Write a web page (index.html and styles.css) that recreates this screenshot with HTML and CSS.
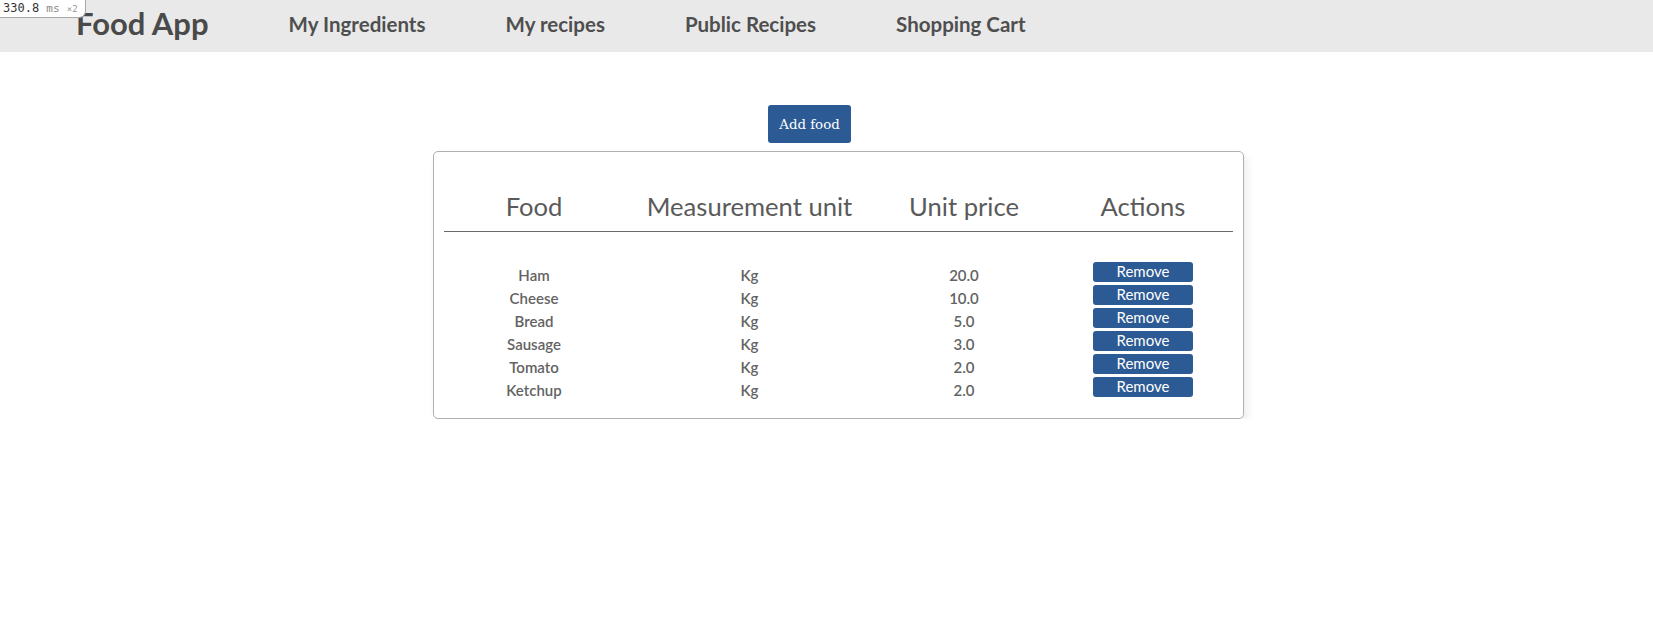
FILE: index.html
```html
<!DOCTYPE html>
<html lang="en">
<head>
<meta charset="utf-8">
<title>Food App</title>
<link rel="stylesheet" href="styles.css">
</head>
<body>
<div class="perf-badge"><span class="perf-val">330.8</span> <span class="perf-unit">ms</span> <span class="perf-x">×2</span></div>
<header class="navbar">
  <a class="brand" href="#">Food App</a>
  <nav class="nav">
    <a class="nav-link" href="#">My Ingredients</a>
    <a class="nav-link" href="#">My recipes</a>
    <a class="nav-link" href="#">Public Recipes</a>
    <a class="nav-link" href="#">Shopping Cart</a>
  </nav>
</header>
<main class="content">
  <div class="actions-bar">
    <button class="btn-add" type="button">Add food</button>
  </div>
  <section class="card">
    <div class="thead">
      <div class="th">Food</div>
      <div class="th">Measurement unit</div>
      <div class="th">Unit price</div>
      <div class="th">Actions</div>
    </div>
    <div class="tbody">
      <div class="tr"><div class="td">Ham</div><div class="td">Kg</div><div class="td">20.0</div><div class="td-btn"><button class="btn-remove" type="button">Remove</button></div></div>
      <div class="tr"><div class="td">Cheese</div><div class="td">Kg</div><div class="td">10.0</div><div class="td-btn"><button class="btn-remove" type="button">Remove</button></div></div>
      <div class="tr"><div class="td">Bread</div><div class="td">Kg</div><div class="td">5.0</div><div class="td-btn"><button class="btn-remove" type="button">Remove</button></div></div>
      <div class="tr"><div class="td">Sausage</div><div class="td">Kg</div><div class="td">3.0</div><div class="td-btn"><button class="btn-remove" type="button">Remove</button></div></div>
      <div class="tr"><div class="td">Tomato</div><div class="td">Kg</div><div class="td">2.0</div><div class="td-btn"><button class="btn-remove" type="button">Remove</button></div></div>
      <div class="tr"><div class="td">Ketchup</div><div class="td">Kg</div><div class="td">2.0</div><div class="td-btn"><button class="btn-remove" type="button">Remove</button></div></div>
    </div>
  </section>
</main>
</body>
</html>
```
FILE: styles.css
```css
* { box-sizing: border-box; }

body {
  margin: 0;
  font-family: Lato, "Noto Sans", sans-serif;
  color: #555;
  background: #fff;
}

.perf-badge {
  position: absolute;
  top: 0;
  left: 0;
  background: #fff;
  border: 1px solid #a8a8a8;
  border-top: none;
  border-left: none;
  border-bottom-right-radius: 7px;
  padding: 0 7px 0 3px;
  height: 18px;
  font-family: "DejaVu Sans Mono", monospace;
  font-size: 12px;
  line-height: 17px;
  color: #333;
  white-space: nowrap;
  z-index: 10;
}
.perf-unit { color: #888; font-size: 11px; }
.perf-x { color: #999; font-size: 9px; }

.navbar {
  display: flex;
  align-items: flex-start;
  height: 52px;
  background: #e9e9e9;
  padding-left: 76px;
  gap: 80px;
}

.brand {
  font-size: 31px;
  font-weight: 700;
  color: #4a4a4a;
  text-decoration: none;
  line-height: 38px;
  padding-top: 4px;
}

.nav {
  display: flex;
  gap: 80px;
}

.nav-link {
  font-size: 20.5px;
  font-weight: 700;
  color: #4f4f4f;
  text-decoration: none;
  line-height: 24px;
  padding-top: 12px;
}

.content {
  width: 811px;
  margin-left: 433px;
  padding-top: 53px;
}

.actions-bar {
  display: flex;
  padding-left: 335px;
}

.btn-add {
  font-family: "DejaVu Serif", serif;
  font-size: 13.333px;
  color: #fff;
  background: #2c5a94;
  border: none;
  border-radius: 3px;
  width: 83px;
  height: 38px;
  padding: 0;
  cursor: pointer;
}

.card {
  margin-top: 8px;
  border: 1px solid #b0b0b0;
  border-radius: 5px;
  box-shadow: 3px 5px 8px rgba(0, 0, 0, 0.08);
  padding: 0 10px 21px;
}

.thead,
.tr {
  display: grid;
  grid-template-columns: 180px 251px 178px 1fr;
}

.thead {
  padding-top: 40px;
  padding-bottom: 10px;
  border-bottom: 1px solid #6a6a6a;
}

.th {
  text-align: center;
  font-size: 25.6px;
  font-weight: 400;
  line-height: 29px;
  color: #5a5a5a;
}

.tbody {
  padding-top: 30px;
  display: flex;
  flex-direction: column;
  gap: 3px;
}

.tr {
  height: 20px;
}

.td {
  text-align: center;
  font-size: 15px;
  font-weight: 600;
  line-height: 18px;
  padding-top: 4px;
  color: #636363;
}

.td-btn {
  display: flex;
  justify-content: center;
}

.btn-remove {
  font-family: Lato, "Noto Sans", sans-serif;
  font-size: 15px;
  font-weight: 400;
  color: #fff;
  background: #2c5a94;
  border: none;
  border-radius: 3px;
  width: 100px;
  height: 20px;
  padding: 0 0 2px;
  line-height: 18px;
  cursor: pointer;
}
```
